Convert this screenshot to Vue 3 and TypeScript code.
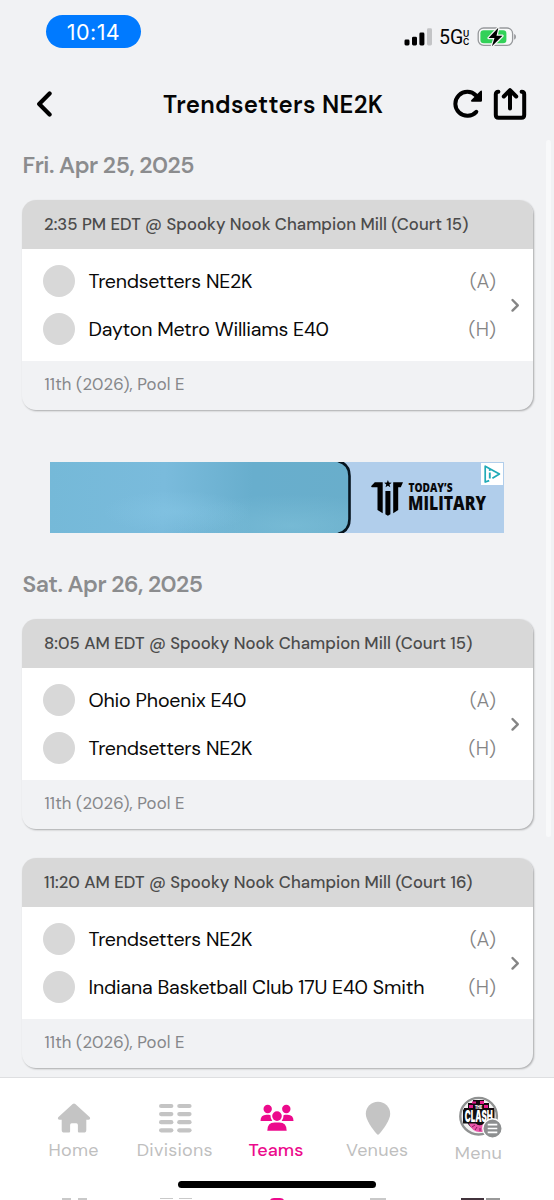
<script setup lang="ts">
interface Team {
  name: string
  width: number
  side: 'A' | 'H'
}
interface Game {
  id: number
  title: string
  titleWidth: number
  teams: Team[]
}
interface Day {
  label: string
  width: number
  games: Game[]
  ad: boolean
}

const days: Day[] = [
  {
    label: 'Fri. Apr 25, 2025',
    width: 172,
    ad: true,
    games: [
      {
        id: 1,
        title: '2:35 PM EDT @ Spooky Nook Champion Mill (Court 15)',
        titleWidth: 424.5,
        teams: [
          { name: 'Trendsetters NE2K', width: 164, side: 'A' },
          { name: 'Dayton Metro Williams E40', width: 240.5, side: 'H' },
        ],
      },
    ],
  },
  {
    label: 'Sat. Apr 26, 2025',
    width: 180.5,
    ad: false,
    games: [
      {
        id: 2,
        title: '8:05 AM EDT @ Spooky Nook Champion Mill (Court 15)',
        titleWidth: 428.5,
        teams: [
          { name: 'Ohio Phoenix E40', width: 158, side: 'A' },
          { name: 'Trendsetters NE2K', width: 164, side: 'H' },
        ],
      },
      {
        id: 3,
        title: '11:20 AM EDT @ Spooky Nook Champion Mill (Court 16)',
        titleWidth: 428.5,
        teams: [
          { name: 'Trendsetters NE2K', width: 164, side: 'A' },
          { name: 'Indiana Basketball Club 17U E40 Smith', width: 336, side: 'H' },
        ],
      },
    ],
  },
]

const sideWidth = { A: 26, H: 27.5 }

// Tracks a one-line label so that it occupies the given width.
const vFit = {
  mounted(el: HTMLElement, binding: { value: number }) {
    const count = (el.textContent ?? '').trim().length
    const natural = el.getBoundingClientRect().width
    if (count > 1) {
      el.style.letterSpacing = `${(binding.value - natural) / (count - 1)}px`
    }
  },
}
</script>

<template>
  <div class="screen">
    <div class="status">
      <div class="clock"><span v-fit="53">10:14</span></div>
      <div class="signals">
        <svg class="bars" width="28" height="18" viewBox="0 0 28 18">
          <rect x="0.5" y="11.5" width="5" height="6" rx="1.4" />
          <rect x="8" y="8.7" width="5" height="8.8" rx="1.4" />
          <rect x="15.4" y="4.6" width="5" height="12.9" rx="1.4" />
          <rect x="23" y="0.3" width="5" height="17.2" rx="1.4" fill="#c3c4c6" />
        </svg>
        <span class="net">5G</span>
        <span class="uc"><span>U</span><span>C</span></span>
        <svg class="battery" width="40" height="22" viewBox="0 0 40 22">
          <rect x="1.2" y="2" width="34.4" height="17.4" rx="5.5" fill="#f8f9f9" stroke="#97999c" stroke-width="1.3" />
          <path d="M37.1 8v5.6c2.5-.8 2.5-4.8 0-5.6z" fill="#97999c" />
          <rect x="3.4" y="4.2" width="26" height="13" rx="3.3" fill="#32d158" />
          <path d="M21.3 1.7 11.5 12h6l-2.6 8.3L25.5 9.8h-6z" fill="#000" stroke="#f4f5f5" stroke-width="2.4" stroke-linejoin="round" paint-order="stroke" />
        </svg>
      </div>
    </div>

    <header class="nav">
      <svg class="back" width="17" height="28" viewBox="0 0 17 28">
        <path d="M14.6 3.5 4.2 14l10.4 10.5" fill="none" stroke="#000" stroke-width="4.2" stroke-linecap="round" stroke-linejoin="round" />
      </svg>
      <h1><span v-fit="220">Trendsetters NE2K</span></h1>
      <div class="actions">
        <svg width="32" height="32" viewBox="0 0 32 32">
          <path d="M24.3 23.8A12 12 0 1 1 24 7.5" fill="none" stroke="#000" stroke-width="4" stroke-linecap="round" />
          <path d="M28.3 3q1.7-1.2 1.7.8v8.700q0 1.200-1.200 1.200h-8.700q-2-.1-.7-1.600z" />
        </svg>
        <svg width="34" height="34" viewBox="0 0 34 34">
          <path d="M5.400 4.700Q2.800 4.700 2.800 7.300V28q0 2.700 2.700 2.700h23q2.700 0 2.700-2.700V7.300q0-2.600-2.600-2.600" fill="none" stroke="#000" stroke-width="4" stroke-linecap="round" />
          <path d="M17 21.500V4M10.800 9.500 17 3.200l6.200 6.300" fill="none" stroke="#000" stroke-width="4" stroke-linecap="round" stroke-linejoin="round" />
        </svg>
      </div>
    </header>

    <main class="list">
      <section v-for="day in days" :key="day.label" class="day">
        <h2><span v-fit="day.width">{{ day.label }}</span></h2>
        <article v-for="game in day.games" :key="game.id" class="card">
          <div class="card-head"><span v-fit="game.titleWidth">{{ game.title }}</span></div>
          <div class="card-body">
            <div class="teams">
              <div v-for="team in game.teams" :key="team.name" class="team">
                <i class="avatar"></i>
                <span class="name"><span v-fit="team.width">{{ team.name }}</span></span>
                <span class="side"><span v-fit="sideWidth[team.side]">({{ team.side }})</span></span>
              </div>
            </div>
            <svg class="chevron" width="10" height="16" viewBox="0 0 10 16">
              <path d="M2.500 3 7.800 8.300 2.500 13.600" fill="none" stroke="#858585" stroke-width="2.400" stroke-linecap="round" stroke-linejoin="round" />
            </svg>
          </div>
          <div class="card-foot"><span v-fit="140">11th (2026), Pool E</span></div>
        </article>

        <div v-if="day.ad" class="ad">
          <div class="ad-art">
            <svg width="301" height="71" viewBox="0 0 301 71">
              <path d="M288-1q11.500 3 11.500 15v43q0 12-11.500 15h14V-1z" fill="#b1ceeb" />
              <path d="M288-1q11.500 3 11.500 15v43q0 12-11.500 15" fill="none" stroke="#07151f" stroke-width="2.600" />
            </svg>
          </div>
          <svg class="ad-mark" width="34" height="36" viewBox="0 0 34 36">
            <path d="M0 6.200 3.800 2.200h7.900v31L6.500 30V7.300H.8z" />
            <path d="M32 2.200H22.200v31l5-3.200V7.300h2.600z" />
            <path d="M14.400 11h5v23.300l-2.500 1.500-2.500-1.500z" />
            <path d="m16.900 0 1 2.500 2.800.2-2.200 1.800.8 2.800-2.400-1.600-2.400 1.600.8-2.800-2.200-1.800 2.800-.2z" />
          </svg>
          <svg class="ad-words" width="82" height="32" viewBox="0 0 82 32">
            <text x="0.500" y="10.500" font-size="12" textLength="44" lengthAdjust="spacingAndGlyphs">TODAY’S</text>
            <text x="0" y="28.500" font-size="19.500" textLength="78" lengthAdjust="spacingAndGlyphs">MILITARY</text>
          </svg>
          <svg class="ad-choice" width="22" height="22" viewBox="0 0 22 22">
            <rect width="22" height="22" fill="#fff" />
            <path d="M8.200 17.600 4.200 19V3.200L18.400 11l-7 4.200" fill="none" stroke="#20aab7" stroke-width="1.700" stroke-linejoin="round" />
            <path d="M8.800 9.500v6" stroke="#20aab7" stroke-width="1.900" />
            <circle cx="8.800" cy="7" r="1.100" fill="#20aab7" />
          </svg>
        </div>
      </section>
      <div class="scrollbar"></div>
    </main>

    <nav class="tabs">
      <div class="tab">
        <svg width="34" height="36" viewBox="0 0 34 36">
          <path d="M15.700 3.100q1.300-1 2.600 0L32.800 16.300q1.100 2.200-1.500 2.400h-2V29q0 2.600-2.600 2.600h-4.800q-1 0-1-1V24q0-1.700-1.600-1.700h-4.600q-1.600 0-1.600 1.700v6.600q0 1-1 1H7.300Q4.700 31.600 4.700 29V18.700h-2Q.1 18.500 1.200 16.300z" />
        </svg>
        <span v-fit="50">Home</span>
      </div>
      <div class="tab">
        <svg width="34" height="36" viewBox="0 0 34 36">
          <template v-for="row in 4" :key="row">
            <rect x="1" :y="row * 8.1 - 5.2" width="14.400" height="4.200" rx="2.100" />
            <rect x="19.200" :y="row * 8.1 - 5.2" width="14.400" height="4.200" rx="2.100" />
          </template>
        </svg>
        <span v-fit="76">Divisions</span>
      </div>
      <div class="tab active">
        <svg width="34" height="36" viewBox="0 0 34 36">
          <circle cx="7.700" cy="8" r="4.200" />
          <circle cx="26.300" cy="8" r="4.200" />
          <path d="M.5 20q0-6.200 6-6.200H9q1 0 1.500.4-.2 3.500 1.800 5.900z" />
          <path d="M33.500 20q0-6.200-6-6.200H25q-1 0-1.500.4.200 3.500-1.800 5.900z" />
          <circle cx="17" cy="15.100" r="4.800" />
          <path d="M7.300 29.700q0-8.200 7.300-8.200h4.800q7.300 0 7.300 8.200z" />
        </svg>
        <span v-fit="55">Teams</span>
      </div>
      <div class="tab">
        <svg width="34" height="36" viewBox="0 0 34 36">
          <path d="M17 .8c6.800 0 12.200 5.200 12.200 12 0 6.300-6.500 15.200-11 20.300q-1.200 1.200-2.400 0C11.300 28 4.800 19.100 4.800 12.800 4.800 6 10.200.8 17 .8z" />
        </svg>
        <span v-fit="62">Venues</span>
      </div>
      <div class="tab menu">
        <svg width="46" height="44" viewBox="0 0 46 44">
          <circle cx="20.600" cy="20.200" r="18.300" fill="#f2f2f2" stroke="#8f9191" stroke-width="2.400" />
          <path d="M15 4h11v3h5v5h5v7H6v-7h4V7h5z" fill="#16090f" />
          <path d="M14 5.500h4v2h-4zM22 5h4v3h-4zM11 9h4v3h-4zM26 9h4v3h-4z" fill="#e61c8d" />
          <path d="M9 26a12.500 12.500 0 0 0 23 0z" fill="#16090f" />
          <path d="M10.500 27h7q3 4 8 1v7.500q-10 3-15-8.500z" fill="#e956ab" />
          <path d="m14 31 3-2m0 5 2-3m3 4v-3" stroke="#871d5c" stroke-width="1" />
          <text x="20.500" y="12.800" text-anchor="middle" font-size="5" textLength="7" lengthAdjust="spacingAndGlyphs" class="crest">THE</text>
          <rect x="5" y="13.500" width="31.500" height="14" fill="#101010" />
          <text x="20.800" y="26" text-anchor="middle" font-size="15.500" textLength="28" lengthAdjust="spacingAndGlyphs" class="crest">CLASH</text>
          <circle cx="34.500" cy="32.500" r="9.700" fill="#8d8f90" stroke="#fff" stroke-width="1.400" />
          <path d="M29.700 28.700h9.600M29.700 32.500h9.600M29.700 36.300h9.600" stroke="#fff" stroke-width="1.700" />
        </svg>
        <span v-fit="47">Menu</span>
      </div>
      <div class="home-bar"></div>
      <svg class="next-row" width="554" height="2" viewBox="0 0 554 2" fill="#c9c9c9">
        <path d="M62 0h9v2h-9zM78 0h9v2h-9zM160 0h13v1h-13zM179 0h13v1h-13zM370 0h16v2h-16z" />
        <path d="M270 2q1-2 4-2h6q3 0 4 2z" fill="#ec0a8c" />
        <path d="M461 0h23v2h-23z" fill="#42333c" />
        <path d="M486 0h14v2h-14z" fill="#999" />
      </svg>
    </nav>
  </div>
</template>

<style>
html,
body {
  margin: 0;
  overflow: hidden;
}
</style>

<style scoped>
.screen {
  position: relative;
  display: flex;
  flex-direction: column;
  width: 554px;
  height: 1200px;
  overflow: hidden;
  background: #f1f2f4;
  color: #050505;
  font-family: "DM Sans", Inter, sans-serif;
  font-variation-settings: "opsz" 14;
}
.screen * {
  box-sizing: border-box;
}
svg {
  display: block;
  flex: none;
}
span {
  white-space: nowrap;
}
.status {
  display: flex;
  flex: none;
  justify-content: space-between;
  height: 70px;
  padding: 15px 37px 0 46px;
  font-family: Inter, sans-serif;
}
.clock {
  display: flex;
  align-items: center;
  justify-content: center;
  width: 95px;
  height: 33px;
  border-radius: 17px;
  background: #007aff;
  color: #fff;
  font-size: 21.5px;
  font-weight: 400;
}
.signals {
  display: flex;
  height: 22px;
  margin-top: 11px;
}
.bars {
  margin-top: 2px;
}
.net {
  width: 24px;
  margin-left: 7px;
  font-family: Roboto, Inter, sans-serif;
  font-size: 19.5px;
  font-weight: 400;
  line-height: 24px;
}
.uc {
  display: flex;
  flex-direction: column;
  width: 8px;
  margin: 4px 6px 0 0;
  font-size: 8.5px;
  font-weight: 600;
  line-height: 8px;
}
.uc > span {
  height: 8px;
}
.nav {
  display: flex;
  flex: none;
  align-items: center;
  height: 68px;
  padding: 0 27px 0 35px;
}
.back {
  margin-right: 111px;
}
h1 {
  width: 220px;
  margin: 2px 0 0;
  font-size: 24px;
  font-weight: 600;
  line-height: 30px;
}
.actions {
  display: flex;
  align-items: center;
  gap: 9px;
  margin-left: auto;
}
.list {
  position: relative;
  flex: none;
  height: 939px;
  padding: 0 21px 0 22px;
}
.day {
  display: flow-root;
}
h2 {
  margin: 12px 0 19px;
  padding-left: 0.5px;
  color: #8b8c8e;
  font-size: 23px;
  font-weight: 600;
  line-height: 31px;
}
.card {
  width: 511px;
  height: 210px;
  margin-bottom: 29.3px;
  overflow: hidden;
  border-radius: 14px;
  background: #f1f2f4;
  box-shadow: 1px 1px 2px rgba(0, 0, 0, 0.3);
}
.card-head {
  height: 49px;
  padding-left: 22px;
  background: #d8d8d8;
  color: #4b4b4b;
  font-size: 16.7px;
  font-weight: 500;
  line-height: 49px;
}
.card-body {
  display: flex;
  align-items: center;
  height: 112px;
  padding: 0 13px 0 21px;
  background: #fff;
}
.teams {
  display: grid;
  flex: 1;
  gap: 17px;
}
.team {
  display: flex;
  align-items: center;
  height: 31px;
}
.avatar {
  width: 32px;
  height: 32px;
  border-radius: 50%;
  background: #d8d8d8;
}
.name {
  flex: 1;
  margin-left: 13.5px;
  color: #090909;
  font-size: 19.6px;
}
.side {
  color: #858585;
  font-size: 19.6px;
  font-weight: 300;
}
.chevron {
  margin-left: 14px;
}
.card-foot {
  height: 49px;
  padding-left: 22.5px;
  color: #85878a;
  font-size: 16.7px;
  line-height: 47px;
}
.ad {
  position: relative;
  display: flex;
  width: 454px;
  height: 71px;
  margin: 52px 0 24px 28px;
  background: #b1ceeb;
}
.ad-art {
  width: 301px;
  height: 71px;
  overflow: hidden;
  background:
    radial-gradient(ellipse at 42% 70%, rgba(139, 203, 233, 0.4), transparent 30%),
    radial-gradient(ellipse at 80% 90%, rgba(139, 203, 225, 0.4), transparent 35%),
    linear-gradient(92deg, #75b9d8 0%, #7abbdc 38%, #68aecd 67%, #69aecb 100%);
}
.ad-mark {
  margin: 18px 0 0 20px;
}
.ad-words {
  margin: 19px 0 0 3px;
  fill: #08090b;
  font-family: "Open Sans", sans-serif;
  font-weight: 800;
}
.ad-choice {
  position: absolute;
  top: 1px;
  right: 1px;
}
.scrollbar {
  position: absolute;
  top: 2px;
  right: 3px;
  width: 5px;
  height: 697px;
  border-radius: 3px;
  background: #f8f9fa;
}
.tabs {
  position: relative;
  display: flex;
  flex: none;
  height: 123px;
  padding: 0 25px 0 23px;
  border-top: 1px solid #dedfe1;
  background: #fff;
}
.tab {
  display: flex;
  flex: 1;
  flex-direction: column;
  align-items: center;
  padding-top: 23px;
  color: #bfbfbf;
  fill: #c4c4c4;
  font-size: 18px;
  line-height: 24px;
}
.tab > svg {
  margin-left: 1px;
}
.tab > span {
  margin-top: 1px;
}
.tab.active {
  color: #ec0a8c;
  fill: #ec0a8c;
  font-weight: 500;
}
.tab.menu {
  padding-top: 18px;
}
.tab.menu > svg {
  margin-left: 5px;
}
.crest {
  fill: #fff;
  font-family: Inter, sans-serif;
  font-weight: 900;
}
.home-bar {
  position: absolute;
  bottom: 12px;
  left: 178px;
  width: 198px;
  height: 7px;
  border-radius: 4px;
  background: #000;
}
.next-row {
  position: absolute;
  bottom: 0;
  left: 0;
}
</style>
